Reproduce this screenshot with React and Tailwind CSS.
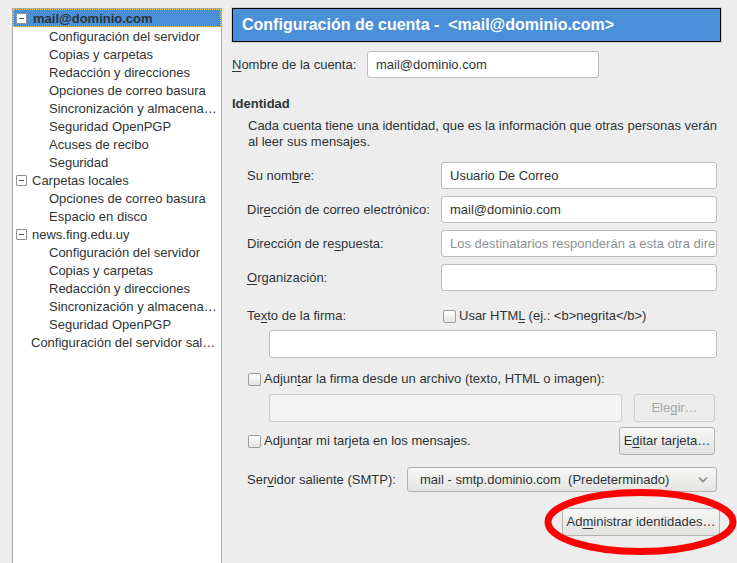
import React from "react";

const font = { fontFamily: '"Liberation Sans", Arial, sans-serif' };

function Minus() {
  return (
    <span className="relative inline-block w-[11px] h-[11px] border border-[#8f8f8f] rounded-[1px] bg-white">
      <span className="absolute left-[2px] right-[2px] top-[4px] h-[1px] bg-[#555]" />
    </span>
  );
}

function Check() {
  return <span className="inline-block w-[13px] h-[13px] rounded-[2px] border border-[#9d9d9b] bg-linear-to-b from-white to-[#e4e4e2] shrink-0" />;
}

function Btn({ children, w, disabled }) {
  return (
    <div
      className={`h-[28px] flex items-center justify-center rounded-[3px] border ${disabled ? "border-[#cdcdcb] text-[#a4a6a5] bg-[#ececec]" : "border-[#b2b2b0] text-[#2e3436] bg-linear-to-b from-[#f7f7f6] to-[#e2e2e0]"}`}
      style={{ width: w }}
    >
      {children}
    </div>
  );
}

const U = ({ children }) => <span className="underline underline-offset-[2px]">{children}</span>;

function Input({ children, placeholder, w, h = 27 }) {
  return (
    <div
      className="bg-white border border-[#bcbcba] rounded-[3px] flex items-center pl-[8px] overflow-hidden whitespace-nowrap shrink-0"
      style={{ width: w, height: h }}
    >
      {placeholder ? <span className="text-[#8e9192]">{placeholder}</span> : <span className="text-[#2e3436]">{children}</span>}
    </div>
  );
}

const tree = [
  { t: "Configuración del servidor", l: 1 },
  { t: "Copias y carpetas", l: 1 },
  { t: "Redacción y direcciones", l: 1 },
  { t: "Opciones de correo basura", l: 1 },
  { t: "Sincronización y almacena…", l: 1 },
  { t: "Seguridad OpenPGP", l: 1 },
  { t: "Acuses de recibo", l: 1 },
  { t: "Seguridad", l: 1 },
  { t: "Carpetas locales", l: 0, box: true },
  { t: "Opciones de correo basura", l: 1 },
  { t: "Espacio en disco", l: 1 },
  { t: "news.fing.edu.uy", l: 0, box: true },
  { t: "Configuración del servidor", l: 1 },
  { t: "Copias y carpetas", l: 1 },
  { t: "Redacción y direcciones", l: 1 },
  { t: "Sincronización y almacena…", l: 1 },
  { t: "Seguridad OpenPGP", l: 1 },
  { t: "Configuración del servidor sal…", l: 0 },
];

export default function App() {
  return (
    <div className="relative w-[737px] h-[563px] bg-[#ededed] text-[13px] text-[#2e3436] overflow-hidden flex" style={font}>
      {/* Tree */}
      <div className="ml-[12px] mt-[8px] w-[210px] h-[555px] bg-white border-l border-r border-t border-[#a8a8a8] flex flex-col shrink-0">
        <div className="h-[18px] bg-[#4a90d9] border border-dotted border-[#f0d050] flex items-center pl-[2px] whitespace-nowrap">
          <Minus />
          <span className="ml-[6px] pt-[2px] font-bold text-[#2e3436]">mail@dominio.com</span>
        </div>
        {tree.map((r, i) => (
          <div key={i} className="h-[18px] flex items-center whitespace-nowrap">
            {r.l === 1 ? (
              <span className="pl-[36px] pt-[2px]">{r.t}</span>
            ) : r.box ? (
              <>
                <span className="ml-[3px] flex items-center"><Minus /></span>
                <span className="ml-[5px] pt-[2px]">{r.t}</span>
              </>
            ) : (
              <span className="pl-[18px] pt-[2px]">{r.t}</span>
            )}
          </div>
        ))}
      </div>

      {/* Right panel */}
      <div className="ml-[10px] w-[489px] flex flex-col">
        <div className="mt-[8px] h-[34px] bg-[#4a90d9] border border-black flex items-center pl-[9px] shadow-[0_0_0_1px_#d0d0d0]">
          <span className="text-white font-bold text-[16px] whitespace-nowrap">Configuración de cuenta -&nbsp; &lt;mail@dominio.com&gt;</span>
        </div>

        <div className="mt-[9px] flex items-center">
          <div className="w-[135px]"><U>N</U>ombre de la cuenta:</div>
          <Input w={232}>mail@dominio.com</Input>
        </div>

        <div className="mt-[17px] h-[18px] flex items-center font-bold">Identidad</div>

        <div className="mt-[5px] pl-[16px] leading-[16px] whitespace-nowrap">
          Cada cuenta tiene una identidad, que es la información que otras personas verán
          <br />
          al leer sus mensajes.
        </div>

        <div className="mt-[12px] flex flex-col gap-[7px]">
          <div className="flex items-center pl-[15px]">
            <div className="w-[194px]">Su nom<U>b</U>re:</div>
            <Input w={276}>Usuario De Correo</Input>
          </div>
          <div className="flex items-center pl-[15px]">
            <div className="w-[194px]">Dir<U>e</U>cción de correo electrónico:</div>
            <Input w={276}>mail@dominio.com</Input>
          </div>
          <div className="flex items-center pl-[15px]">
            <div className="w-[194px]">Dirección de re<U>s</U>puesta:</div>
            <Input w={276} placeholder="Los destinatarios responderán a esta otra dire" />
          </div>
          <div className="flex items-center pl-[15px]">
            <div className="w-[194px]"><U>O</U>rganización:</div>
            <Input w={276} />
          </div>
        </div>

        <div className="mt-[16px] h-[18px] flex items-center pl-[15px]">
          <div className="w-[196px]">Te<U>x</U>to de la firma:</div>
          <Check />
          <span className="ml-[3px] whitespace-nowrap">Usar HTM<U>L</U> (ej.: &lt;b&gt;negrita&lt;/b&gt;)</span>
        </div>

        <div className="mt-[5px] ml-[37px]">
          <Input w={448} h={28} />
        </div>

        <div className="mt-[12px] h-[18px] flex items-center pl-[16px]">
          <Check />
          <span className="ml-[3px] whitespace-nowrap">Adjun<U>t</U>ar la firma desde un archivo (texto, HTML o imagen):</span>
        </div>

        <div className="mt-[6px] ml-[37px] flex items-center gap-[12px]">
          <div className="w-[353px] h-[28px] rounded-[3px] border border-[#cdcdcb] bg-[#f4f4f4]" />
          <Btn w={81} disabled>Ele<U>g</U>ir…</Btn>
        </div>

        <div className="mt-[5px] flex items-center pl-[16px] pr-[6px]">
          <Check />
          <span className="ml-[3px] whitespace-nowrap">Adjun<U>t</U>ar mi tarjeta en los mensajes.</span>
          <div className="ml-auto">
            <Btn w={96}>E<U>d</U>itar tarjeta…</Btn>
          </div>
        </div>

        <div className="mt-[12px] flex items-center pl-[15px]">
          <div className="w-[160px] whitespace-nowrap">Ser<U>v</U>idor saliente (SMTP):</div>
          <div className="w-[310px] h-[25px] rounded-[3px] border border-[#b2b2b0] bg-linear-to-b from-[#f7f7f6] to-[#e4e4e2] flex items-center pl-[12px] pr-[8px]">
            <span className="whitespace-pre">mail - smtp.dominio.com  (Predeterminado)</span>
            <svg className="ml-auto" width="10" height="7" viewBox="0 0 10 7">
              <path d="M1 1.5 L5 5.5 L9 1.5" fill="none" stroke="#8a8a8a" strokeWidth="1.6" />
            </svg>
          </div>
        </div>

        <div className="mt-[16px] flex justify-end pr-[1px]">
          <Btn w={158}>Ad<U>m</U>inistrar identidades…</Btn>
        </div>
      </div>

      <svg className="absolute left-[544px] top-[488px]" width="193" height="68" viewBox="0 0 193 68">
        <ellipse cx="96.5" cy="34" rx="92.5" ry="29.5" fill="none" stroke="#ff0000" strokeWidth="7" />
      </svg>
    </div>
  );
}
